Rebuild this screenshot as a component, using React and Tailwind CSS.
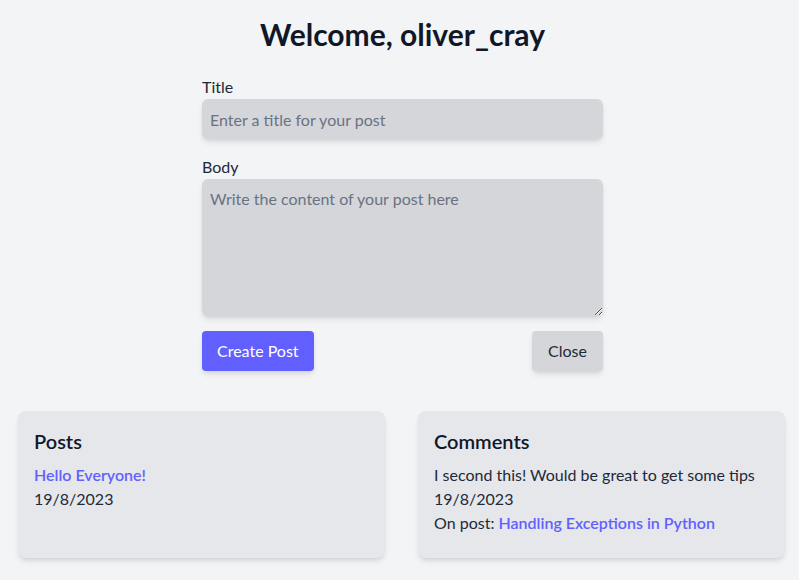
export default function App() {
  return (
    <div className="min-h-[580px] bg-gray-100 text-gray-900" style={{ fontFamily: '"Segoe UI", Lato, "Noto Sans", sans-serif' }}>
      <div className="pl-[6px] pt-[16px]">
        <h1 className="text-center text-3xl font-bold text-gray-900">Welcome, oliver_cray</h1>
        <form className="mx-auto mt-[23px] w-[401px]">
          <label className="block text-base text-gray-800">Title</label>
          <input
            className="block h-10 w-full rounded-md bg-[#d4d6da] px-2 text-base shadow-md outline-none placeholder:text-gray-500"
            placeholder="Enter a title for your post"
          />
          <label className="mt-4 block text-base text-gray-800">Body</label>
          <textarea
            className="block h-[137px] w-full rounded-md bg-[#d4d6da] px-2 py-2 text-base shadow-md outline-none placeholder:text-gray-500"
            placeholder="Write the content of your post here"
          />
          <div className="mt-[15px] flex justify-between">
            <button type="button" className="h-10 rounded bg-indigo-500 px-[15px] text-base text-white shadow-md">Create Post</button>
            <button type="button" className="h-10 rounded bg-[#d4d6da] px-4 text-base text-gray-800 shadow-md">Close</button>
          </div>
        </form>
      </div>
      <div className="mt-10 grid grid-cols-2 gap-[33px] pl-[18px] pr-[14px]">
        <div className="h-[147px] rounded-lg bg-gray-200 p-4 shadow-md">
          <h2 className="text-xl font-semibold">Posts</h2>
          <div className="mt-2 text-gray-800">
            <a className="block font-semibold text-indigo-500">Hello Everyone!</a>
            <div>19/8/2023</div>
          </div>
        </div>
        <div className="h-[147px] rounded-lg bg-gray-200 p-4 shadow-md">
          <h2 className="text-xl font-semibold">Comments</h2>
          <div className="mt-2 text-gray-800">
            <div>I second this! Would be great to get some tips</div>
            <div>19/8/2023</div>
            <div>
              On post: <a className="font-semibold text-indigo-500">Handling Exceptions in Python</a>
            </div>
          </div>
        </div>
      </div>
    </div>
  );
}
